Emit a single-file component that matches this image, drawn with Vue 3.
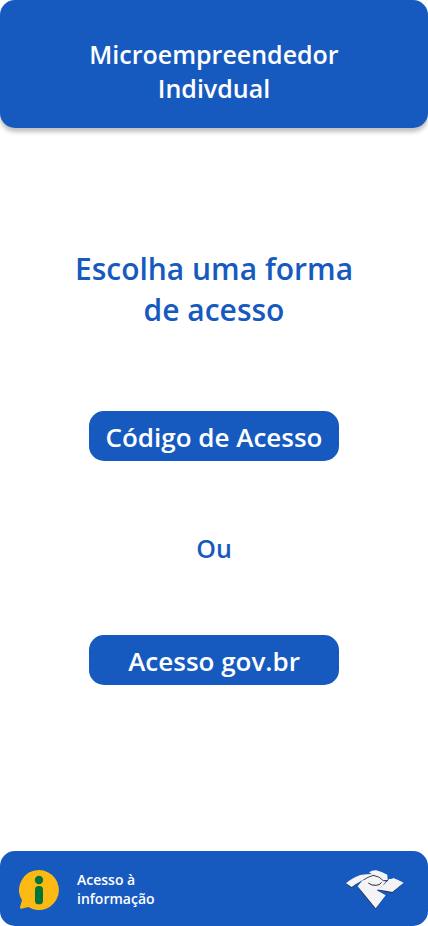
<script setup>
const options = ['Código de Acesso', 'Acesso gov.br']
</script>

<template>
  <div class="page">
    <header class="header">
      <h1>Microempreendedor<br />Indivdual</h1>
    </header>

    <main class="content">
      <h2>Escolha uma forma<br />de acesso</h2>
      <button type="button" class="option">{{ options[0] }}</button>
      <p class="or">Ou</p>
      <button type="button" class="option">{{ options[1] }}</button>
    </main>

    <footer class="footer">
      <a href="#" class="info">
        <svg class="info-icon" viewBox="0 0 120 120" aria-hidden="true">
          <path d="M60 0A60 60 0 1 1 28 111C20 113 11 116 6 116Q2 116 3 111L9 91A60 60 0 0 1 60 0Z" fill="#fdb913" />
          <circle cx="60" cy="30" r="12.5" fill="#00743a" />
          <rect x="48" y="48" width="24" height="55" rx="11" fill="#00743a" />
        </svg>
        <span>Acesso à<br />informação</span>
      </a>
      <svg class="bird" viewBox="45 30 180 120" aria-hidden="true">
        <g fill="#262b38">
          <path d="M48 71L65 83L80 73L78 64Z" />
          <path d="M82 80L136 147L145 136L128 120Z" />
          <path d="M140 90L187 99L221 69L187 92Z" />
        </g>
        <g fill="#f4f4f4">
          <path d="M48 70Q64 55 91 45Q110 42 128 42L130 47Q108 53 94 62Q80 70 65 81Z" />
          <path d="M117 37Q127 30 139 31Q158 36 172 44L173 61L158 62Q145 50 131 46Z" />
          <path d="M83 79L96 63Q104 54 120 49Q136 46 148 51L162 63L168 64L158 77L140 91L167 106L137 145Z" />
          <path d="M139 88Q155 82 164 72L178 56Q184 59 190 54Q205 60 221 68L187 96Q162 91 139 88Z" />
        </g>
        <g fill="none" stroke="#202431" stroke-linecap="round">
          <path d="M102 59Q113 51 130 46Q149 49 160 62L173 62" stroke-width="2.5" />
          <path d="M116 70Q124 77 139 76Q151 75 154 68" stroke-width="3" />
        </g>
      </svg>
    </footer>
  </div>
</template>

<style>
body {
  margin: 0;
  background: #fff;
}
</style>

<style scoped>
.page {
  display: flex;
  flex-direction: column;
  min-height: 100vh;
  font-family: "Open Sans", "Noto Sans", sans-serif;
  font-weight: 600;
  color: #175abf;
}

.header {
  padding: 37px 16px 23px;
  border-radius: 15px;
  background: #175abf;
  box-shadow: 0 4px 4px rgba(0, 0, 0, 0.25);
  color: #fff;
  text-align: center;
}

h1,
h2,
p {
  margin: 0;
  font-weight: inherit;
}

h1 {
  font-size: 25px;
  line-height: 34px;
}

.content {
  display: flex;
  flex: 1;
  flex-direction: column;
  align-items: center;
  padding: 120px 16px 32px;
  text-align: center;
}

h2 {
  margin-bottom: 81px;
  font-size: 30px;
  line-height: 41px;
}

.option {
  width: 250px;
  height: 50px;
  padding: 2px 0 0;
  border: 0;
  border-radius: 15px;
  background: #175abf;
  color: #fff;
  font: inherit;
  font-size: 26px;
  line-height: 34px;
  white-space: nowrap;
  cursor: pointer;
}

.or {
  margin: 70px 0;
  font-size: 25px;
  line-height: 34px;
}

.footer {
  display: flex;
  align-items: center;
  justify-content: space-between;
  padding: 19px 23px 16px 19px;
  border-radius: 15px;
  background: #175abf;
}

.info {
  display: flex;
  align-items: flex-start;
  gap: 18px;
  color: #fff;
  font-size: 14px;
  line-height: 19px;
  text-decoration: none;
}

.info-icon {
  width: 40px;
  height: 40px;
}

.bird {
  width: 60px;
  height: 40px;
}
</style>
